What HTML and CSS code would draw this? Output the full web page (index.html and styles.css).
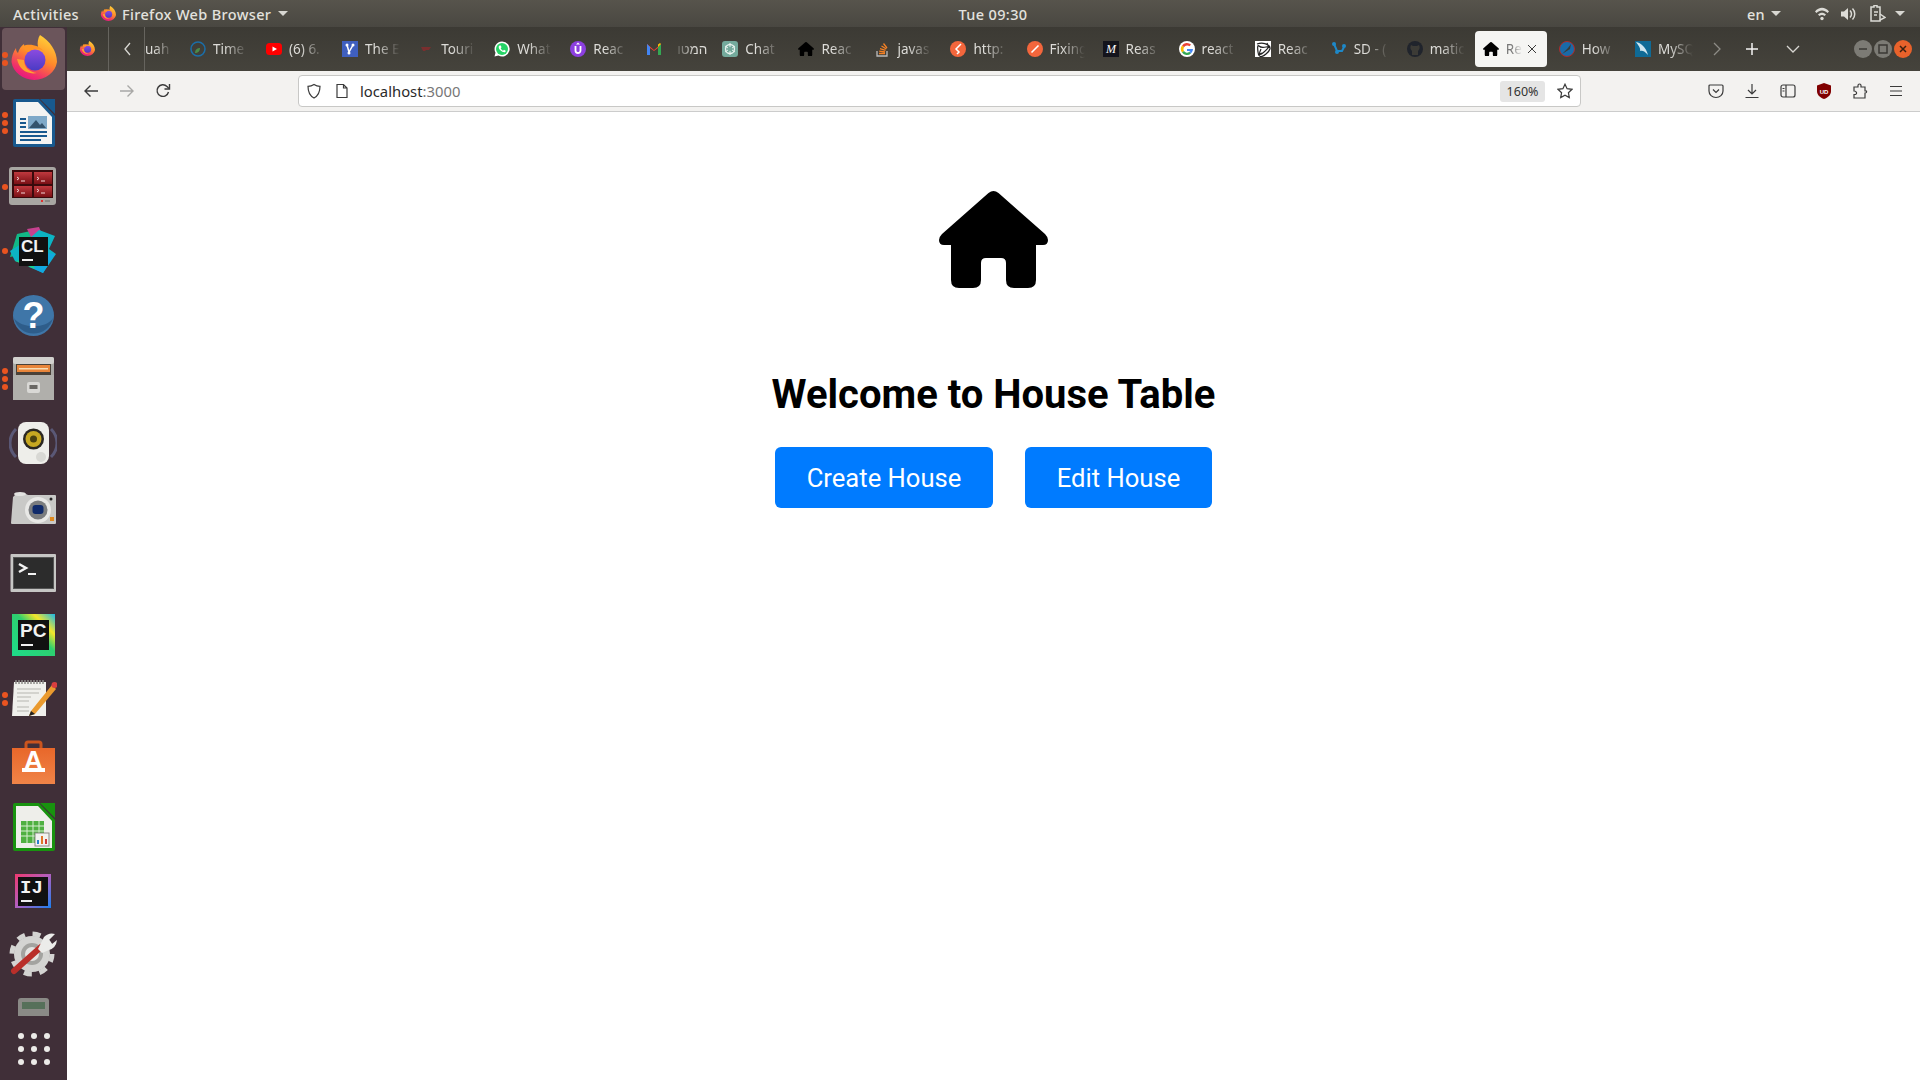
FILE: index.html
```html
<!DOCTYPE html>
<html lang="en">
<head>
    <meta charset="UTF-8">
    <title>React App</title>
    <link rel="stylesheet" href="styles.css">
</head>
<body>
    <svg class="sprites" width="0" height="0">
        <defs>
            <linearGradient id="fx-outer" x1="0.85" y1="0" x2="0.35" y2="1">
                <stop offset="0" stop-color="#ffd93a"/>
                <stop offset="0.5" stop-color="#ff8a2a"/>
                <stop offset="0.85" stop-color="#f0306a"/>
                <stop offset="1" stop-color="#e8177f"/>
            </linearGradient>
            <linearGradient id="fx-inner" x1="0.5" y1="0" x2="0.5" y2="1">
                <stop offset="0" stop-color="#8c4be0"/>
                <stop offset="1" stop-color="#4a3bc4"/>
            </linearGradient>
            <linearGradient id="red-panel" x1="0" y1="0" x2="0" y2="1">
                <stop offset="0" stop-color="#c0393e"/>
                <stop offset="1" stop-color="#7a1015"/>
            </linearGradient>
            <linearGradient id="pc-bg" x1="0" y1="1" x2="1" y2="0">
                <stop offset="0" stop-color="#1ddc8b"/>
                <stop offset="0.55" stop-color="#2ecf6f"/>
                <stop offset="0.75" stop-color="#f5e52a"/>
                <stop offset="1" stop-color="#1ab8e8"/>
            </linearGradient>
            <linearGradient id="store-bg" x1="0" y1="0" x2="0" y2="1">
                <stop offset="0" stop-color="#e8672a"/>
                <stop offset="1" stop-color="#f08448"/>
            </linearGradient>
            <linearGradient id="ij-bg" x1="0" y1="0" x2="1" y2="1">
                <stop offset="0" stop-color="#f0386e"/>
                <stop offset="0.5" stop-color="#b060c0"/>
                <stop offset="1" stop-color="#1a80f0"/>
            </linearGradient>
            <symbol id="firefox" viewBox="0 0 48 48">
                <path d="M31 0C41 6 48 16 48 27A23 21 0 0 1 2.500 27C2.500 22 4 17 7 13C7 16 8 17 9 18C10 14 12 11 15 9C15 12 16 13 18 13C22 11 26 11 29 12C28 8 29 3 31 0z" fill="url(#fx-outer)"/>
                <path d="M8 24C10 34 18 40 28 38C20 37 15 32 15 25z" fill="#ffa030"/>
                <circle cx="26" cy="25" r="10.500" fill="url(#fx-inner)"/>
                <path d="M14 11C20 8 30 10 36 17C30 13 24 13 21 16C19 18 16 17 14 11z" fill="#ff9426"/>
            </symbol>
            <symbol id="house" viewBox="0 0 109 97">
                <path d="M49.500 2Q54.500-2 59.500 2L106 43Q109 46 109 49Q109 54 104 54H97V89Q97 97 89 97H75Q67 97 67 89V72Q67 67 62 67H47Q42 67 42 72V89Q42 97 34 97H20Q12 97 12 89V54H5Q0 54 0 49Q0 46 3 43Z"/>
            </symbol>
        </defs>
    </svg>

    <header class="topbar">
        <div class="topbar-left">
            <span class="top-label activities">Activities</span>
            <span class="top-app">
                <svg class="icon16"><use href="#firefox"/></svg>
                <span class="top-label">Firefox Web Browser</span>
                <span class="caret"></span>
            </span>
        </div>
        <div class="top-label clock">Tue 09:30</div>
        <div class="topbar-right">
            <span class="top-label lang">en</span>
            <span class="caret lang-caret"></span>
            <svg class="tray wifi" viewBox="0 0 14 14"><path d="M0 4.500C4-.5 10-.5 14 4.500L12.500 6C9.500 2.500 4.500 2.500 1.500 6z" fill="#dcdbd6"/><path d="M3 7.500C5.500 5 8.500 5 11 7.500L9.500 9C8 7.500 6 7.500 4.500 9z" fill="#dcdbd6"/><circle cx="7" cy="11.500" r="1.700" fill="#dcdbd6"/></svg>
            <svg class="tray sound" viewBox="0 0 16 14"><path d="M0 4.500H3L7 1V13L3 9.500H0z" fill="#dcdbd6"/><path d="M9 3.500C11 5.500 11 8.500 9 10.500M11.500 1.500C14.500 4.500 14.500 9.500 11.500 12.500" fill="none" stroke="#dcdbd6" stroke-width="1.500"/></svg>
            <svg class="tray battery" viewBox="0 0 17 17"><path d="M5 .5H8V2H11V16H2V2H5z" fill="none" stroke="#dcdbd6" stroke-width="1.500"/><path d="M5 7H9M5 10H8M11 9L16 12.500 11 15" fill="none" stroke="#dcdbd6" stroke-width="1.500"/></svg>
            <span class="caret"></span>
        </div>
    </header>

    <div class="desktop">
        <!-- Ubuntu dock -->
        <nav class="dock">
            <ul class="dock-list">
                <li class="dock-item active">
                    <span class="dots"><i></i><i></i></span>
                    <svg class="dock-icon"><use href="#firefox"/></svg>
                </li>
                <li class="dock-item">
                    <span class="dots"><i></i><i></i><i></i></span>
                    <svg class="dock-icon" viewBox="0 0 48 48">
                        <path d="M31 0H46V15z" fill="#18598e"/>
                        <path d="M6 0H30L46 17V46Q46 48 44 48H6Q4 48 4 46V2Q4 0 6 0z" fill="#18598e"/>
                        <path d="M7 3H29L43 18V45H7z" fill="#f4f4f2"/>
                        <rect x="19" y="17" width="19" height="13" fill="#7ea9c8"/>
                        <path d="M20 29L27 21 31 26 33 24 37 29z" fill="#33536c"/>
                        <path d="M11 20H17M11 24H17M11 28H17M11 33H38M11 37H38M11 41H32" stroke="#18598e" stroke-width="2"/>
                    </svg>
                </li>
                <li class="dock-item">
                    <span class="dots"><i></i></span>
                    <svg class="dock-icon" viewBox="0 0 48 48">
                        <rect x="0" y="4" width="47" height="38" rx="3" fill="#a8a6a2"/>
                        <rect x="3" y="7" width="41" height="28" fill="#3a0a0c"/>
                        <rect x="5" y="9" width="18" height="12" fill="url(#red-panel)"/>
                        <rect x="25" y="9" width="18" height="12" fill="url(#red-panel)"/>
                        <rect x="5" y="23" width="18" height="11" fill="url(#red-panel)"/>
                        <rect x="25" y="23" width="18" height="11" fill="url(#red-panel)"/>
                        <path d="M8 14L10 15.500 8 17M12 18H16M28 14L30 15.500 28 17M32 18H36M8 26L10 27.500 8 29M12 30H16M28 26L30 27.500 28 29M32 30H36" stroke="#f2d4d4" fill="none"/>
                        <rect x="32" y="37" width="2" height="2" fill="#e03030"/>
                        <rect x="36" y="37" width="5" height="2" fill="#8a8884"/>
                    </svg>
                </li>
                <li class="dock-item">
                    <span class="dots"><i></i></span>
                    <svg class="dock-icon" viewBox="0 0 48 48">
                        <path d="M8 7L26 3 32 14 22 26 1 30z" fill="#12b886"/>
                        <path d="M18 2L30 0 34 10 24 14z" fill="#c6418f"/>
                        <path d="M30 3L46 9 40 22 47 27 34 46 18 38 6 34 1 24 20 12z" fill="#0cb4c4"/>
                        <path d="M38 26L46 27 34 46 20 40z" fill="#12a8e0"/>
                        <path d="M6 34L22 32 26 42 16 38z" fill="#1dd08a"/>
                        <rect x="10" y="10" width="29" height="29" fill="#111"/>
                        <text x="12" y="25" class="logo-text">CL</text>
                        <rect x="13" y="32" width="11" height="2" fill="#eee"/>
                    </svg>
                </li>
                <li class="dock-item">
                    <svg class="dock-icon" viewBox="0 0 48 48">
                        <circle cx="24.500" cy="24.500" r="20.500" fill="#3f76a8"/>
                        <path d="M5 27A20 20 0 0 0 44 27C38 38 12 38 5 27z" fill="#2e5d8a"/>
                        <text x="24.500" y="37" class="help-text">?</text>
                    </svg>
                </li>
                <li class="dock-item">
                    <span class="dots"><i></i><i></i><i></i></span>
                    <svg class="dock-icon" viewBox="0 0 48 48">
                        <rect x="4" y="2" width="41" height="43" rx="2" fill="#a9a8a4"/>
                        <rect x="4" y="2" width="41" height="7" rx="2" fill="#d2d1ce"/>
                        <rect x="7" y="9" width="35" height="11" fill="#4a4138"/>
                        <rect x="8" y="10" width="33" height="7" fill="#e8853a"/>
                        <rect x="10" y="13" width="29" height="1.500" fill="#f6dcb4"/>
                        <rect x="4" y="20" width="41" height="25" fill="#b0afab"/>
                        <rect x="18" y="27" width="13" height="11" rx="2" fill="#d9d8d5"/>
                        <rect x="20.500" y="30" width="8" height="4" fill="#6a6864"/>
                    </svg>
                </li>
                <li class="dock-item">
                    <svg class="dock-icon" viewBox="0 0 48 48">
                        <path d="M7 10C-1 18-1 30 7 38M42 10C50 18 50 30 42 38" fill="none" stroke="#5a5876" stroke-width="3"/>
                        <rect x="9" y="3" width="31" height="42" rx="8" fill="#eeeeea"/>
                        <circle cx="24.500" cy="20" r="10.500" fill="#2a2722"/>
                        <circle cx="24.500" cy="20" r="8" fill="#c7a822"/>
                        <circle cx="24.500" cy="20" r="3.500" fill="#4b4210"/>
                        <circle cx="32" cy="38" r="5" fill="#d8d8d4"/>
                    </svg>
                </li>
                <li class="dock-item">
                    <svg class="dock-icon" viewBox="0 0 48 48">
                        <path d="M4 14L7 11H17L19 12H46Q47 12 47 13V40Q47 41 46 41H3Q2 41 2 40z" fill="#c9c9c7"/>
                        <ellipse cx="11" cy="11" rx="6" ry="2" fill="#e2e2e0"/>
                        <circle cx="29" cy="27" r="13" fill="#e8e8e6"/>
                        <circle cx="29" cy="27" r="9.500" fill="#7a7c7e"/>
                        <rect x="23.500" y="22" width="11" height="9" rx="3" fill="#0f2a6a"/>
                        <rect x="41" y="34" width="4" height="4" fill="#e08a20"/>
                        <circle cx="42" cy="16" r="1.500" fill="#222"/>
                    </svg>
                </li>
                <li class="dock-item">
                    <svg class="dock-icon" viewBox="0 0 48 48">
                        <rect x="1.500" y="7" width="45.500" height="38" rx="1" fill="#c6c6c4"/>
                        <rect x="4" y="10" width="41" height="32" fill="#555"/>
                        <rect x="5" y="11" width="39" height="30" fill="#2c2c2c"/>
                        <path d="M10 17L17 21 10 25" fill="none" stroke="#f2f2f2" stroke-width="2.500"/>
                        <rect x="19" y="26" width="8" height="2" fill="#f2f2f2"/>
                    </svg>
                </li>
                <li class="dock-item">
                    <svg class="dock-icon" viewBox="0 0 48 48">
                        <rect x="3" y="3" width="43" height="42" fill="url(#pc-bg)"/>
                        <rect x="9" y="9" width="31" height="30" fill="#111"/>
                        <text x="11" y="26" class="logo-text pc-text">PC</text>
                        <rect x="12" y="33" width="12" height="2" fill="#f2f2f2"/>
                    </svg>
                </li>
                <li class="dock-item">
                    <span class="dots"><i></i><i></i></span>
                    <svg class="dock-icon" viewBox="0 0 48 48">
                        <path d="M5 7H37V41H3z" fill="#f0f0ec"/>
                        <path d="M7 5V9M10 5V9M13 5V9M16 5V9M19 5V9M22 5V9M25 5V9M28 5V9M31 5V9M34 5V9" stroke="#8a8a86" stroke-width="1.500"/>
                        <path d="M8 14H32M8 18H30M8 22H22M8 26H20M8 32H20M8 36H20" stroke="#b5b5b0" stroke-width="1.200"/>
                        <path d="M22 36L43 10 47 14 26 39 20 41z" fill="#ea9a2e"/>
                        <path d="M20 41L22 36 26 39z" fill="#222"/>
                        <circle cx="45.500" cy="10" r="3" fill="#d93f3f"/>
                    </svg>
                </li>
                <li class="dock-item">
                    <svg class="dock-icon" viewBox="0 0 48 48">
                        <path d="M17 10V5Q17 3 19 3H30Q32 3 32 5V10" fill="none" stroke="#c9541e" stroke-width="3"/>
                        <path d="M3 9H46V45H3z" fill="url(#store-bg)"/>
                        <text x="24.500" y="30" class="store-text">A</text>
                        <rect x="13" y="29" width="23" height="4" fill="#fff"/>
                    </svg>
                </li>
                <li class="dock-item">
                    <svg class="dock-icon" viewBox="0 0 48 48">
                        <path d="M31 0H46V15z" fill="#18930f"/>
                        <path d="M6 0H30L46 17V46Q46 48 44 48H6Q4 48 4 46V2Q4 0 6 0z" fill="#18930f"/>
                        <path d="M7 3H29L43 18V45H7z" fill="#eeeeea"/>
                        <rect x="12" y="18" width="23" height="22" fill="#4fb041"/>
                        <path d="M12 23H35M12 28H35M12 33H35M18 18V40M24 18V40M30 18V40" stroke="#d8efd2"/>
                        <rect x="26" y="30" width="14" height="13" fill="#f2f2f0" stroke="#8a8a86"/>
                        <rect x="28" y="37" width="2" height="4" fill="#2a7fd0"/>
                        <rect x="32" y="33" width="2" height="8" fill="#e0762a"/>
                        <rect x="36" y="36" width="2" height="5" fill="#d03a3a"/>
                    </svg>
                </li>
                <li class="dock-item">
                    <svg class="dock-icon" viewBox="0 0 48 48">
                        <rect x="6" y="7" width="36" height="34" fill="url(#ij-bg)"/>
                        <rect x="9" y="10" width="30" height="29" fill="#111"/>
                        <text x="11" y="26" class="logo-text ij-text">IJ</text>
                        <rect x="12" y="33" width="11" height="2" fill="#eee"/>
                    </svg>
                </li>
                <li class="dock-item">
                    <svg class="dock-icon" viewBox="0 0 48 48">
                        <circle cx="23" cy="23" r="20" fill="none" stroke="#d4d4d2" stroke-width="5" stroke-dasharray="8 7.700"/>
                        <circle cx="23" cy="23" r="18" fill="#d4d4d2"/>
                        <circle cx="23" cy="23" r="11" fill="#a3a3a0"/>
                        <circle cx="23" cy="23" r="7" fill="#e4e4e2"/>
                        <path d="M5 40L32 16" stroke="#b92f2a" stroke-width="6" stroke-linecap="round"/>
                        <path d="M29 18L35 6Q40 1 46 3L40 9 43 13 48 9Q47 17 40 19L33 22z" fill="#ececea"/>
                    </svg>
                </li>
                <li class="dock-item">
                    <svg class="dock-icon" viewBox="0 0 48 48">
                        <path d="M12 3H37Q40 3 40 6V30H9V6Q9 3 12 3z" fill="#8a8a86"/>
                        <rect x="13" y="7" width="23" height="7" fill="#56705a"/>
                    </svg>
                </li>
            </ul>
            <div class="app-grid">
                <i></i><i></i><i></i><i></i><i></i><i></i><i></i><i></i><i></i>
            </div>
        </nav>

        <div class="browser">
            <!-- Firefox tab strip -->
            <div class="tabbar">
                <span class="fx-view">
                    <svg class="icon16"><use href="#firefox"/></svg>
                </span>
                <span class="tab-scroll">
                    <svg class="icon16" viewBox="0 0 16 16"><path d="M10 2L5 8l5 6" class="line"/></svg>
                </span>
                <div class="tabs">
                    <div class="tab tab-cut"><span class="tab-label">uah</span></div>
                    <div class="tab">
                        <svg class="icon16" viewBox="0 0 16 16"><circle cx="8" cy="8" r="7" fill="none" stroke="#1b6ea8" stroke-width="1.500"/><path d="M5 12C5 8 8 7 10 7 10 10 8 12 5 12z" fill="#4a8a4a"/></svg>
                        <span class="tab-label">Time</span>
                    </div>
                    <div class="tab">
                        <svg class="icon16" viewBox="0 0 16 16"><rect y="2" width="16" height="12" rx="3.500" fill="#f00"/><path d="M6.500 5.500L11 8 6.500 10.500z" fill="#fff"/></svg>
                        <span class="tab-label">(6) 6.</span>
                    </div>
                    <div class="tab">
                        <svg class="icon16" viewBox="0 0 16 16"><rect width="16" height="16" fill="#3f5fbf"/><path d="M5 4L7 11 11 4" fill="none" stroke="#fff" stroke-width="1.500"/><circle cx="5" cy="4" r="1.500" fill="#fff"/><circle cx="11" cy="4" r="1.500" fill="#fff"/><circle cx="7" cy="12" r="1.500" fill="#fff"/></svg>
                        <span class="tab-label">The E</span>
                    </div>
                    <div class="tab">
                        <svg class="icon16" viewBox="0 0 16 16"><path d="M3 6H13L11 9H8L7 10H5z" fill="#7a2f2f"/></svg>
                        <span class="tab-label">Touri</span>
                    </div>
                    <div class="tab">
                        <svg class="icon16" viewBox="0 0 16 16"><path d="M8 .5A7.500 7.500 0 0 0 1.500 11.700L.5 15.500 4.400 14.500A7.500 7.500 0 1 0 8 .5z" fill="#fff"/><circle cx="8" cy="8" r="6" fill="#25d366"/><path d="M5.500 4.500L6.800 4.500 7.500 6.300 6.700 7.300C7.200 8.500 8 9.200 9 9.700L10 8.800 11.700 9.700 11.400 11C9 12 4 8.500 4.800 5.200z" fill="#fff"/></svg>
                        <span class="tab-label">What</span>
                    </div>
                    <div class="tab">
                        <svg class="icon16" viewBox="0 0 16 16"><circle cx="8" cy="8" r="8" fill="#8c3fe0"/><path d="M5.500 5V9.500A2.500 2.500 0 0 0 10.500 9.500V5" fill="none" stroke="#fff" stroke-width="1.800"/><path d="M8 1.500L10 3.500H6z" fill="#fff"/></svg>
                        <span class="tab-label">Reac</span>
                    </div>
                    <div class="tab">
                        <svg class="icon16" viewBox="0 0 16 16"><path d="M1 3L8 9 15 3V14H12V7L8 10 4 7V14H1z" fill="#ea4335"/><path d="M1 3V14H4V6z" fill="#4285f4"/><path d="M12 6V14H15V3z" fill="#34a853"/><path d="M12 6L15 3 14 2 12 3.500z" fill="#fbbc04"/></svg>
                        <span class="tab-label rtl" dir="rtl">המטו</span>
                    </div>
                    <div class="tab">
                        <svg class="icon16" viewBox="0 0 16 16"><rect width="16" height="16" rx="3" fill="#74aa9c"/><circle cx="8" cy="8" r="4.500" fill="none" stroke="#e8f2ee" stroke-width="1.300"/><path d="M8 2V6M13 5L10 7M13 11L10 9M8 14V10M3 11L6 9M3 5L6 7" stroke="#e8f2ee"/></svg>
                        <span class="tab-label">Chat</span>
                    </div>
                    <div class="tab">
                        <svg class="icon16"><use href="#house"/></svg>
                        <span class="tab-label">Reac</span>
                    </div>
                    <div class="tab">
                        <svg class="icon16" viewBox="0 0 16 16"><path d="M3 10V15H13V10" fill="none" stroke="#bcbbbb" stroke-width="1.300"/><path d="M5 12.500H11M5.200 10.200L11 11M6 7.700L11.500 9.300M7.500 5L12.300 8M9.500 2.500L13 7" stroke="#f48024" stroke-width="1.300"/></svg>
                        <span class="tab-label">javas</span>
                    </div>
                    <div class="tab">
                        <svg class="icon16" viewBox="0 0 16 16"><circle cx="8" cy="8" r="8" fill="#f3663c"/><path d="M11 3L6 8 9 11 7 13" fill="none" stroke="#fff" stroke-width="1.500"/></svg>
                        <span class="tab-label">http:</span>
                    </div>
                    <div class="tab">
                        <svg class="icon16" viewBox="0 0 16 16"><circle cx="8" cy="8" r="8" fill="#f3663c"/><path d="M4.500 11.500L11.500 4.500" stroke="#fff" stroke-width="1.600"/></svg>
                        <span class="tab-label">Fixing</span>
                    </div>
                    <div class="tab">
                        <svg class="icon16" viewBox="0 0 16 16"><rect width="16" height="16" fill="#14141c"/><text x="8" y="12" class="medium-text">M</text></svg>
                        <span class="tab-label">Reas</span>
                    </div>
                    <div class="tab">
                        <svg class="icon16" viewBox="0 0 16 16"><circle cx="8" cy="8" r="8" fill="#fff"/><path d="M8 4.500A3.500 3.500 0 0 0 5 6.200L3 4.500A6 6 0 0 1 12 3.500L10.500 5.200A3.500 3.500 0 0 0 8 4.500z" fill="#ea4335"/><path d="M3 4.500A6 6 0 0 0 3 11.500L5 10A3.500 3.500 0 0 1 5 6.200z" fill="#fbbc04"/><path d="M3 11.500A6 6 0 0 0 12 12.500L10.300 10.800A3.500 3.500 0 0 1 5 10z" fill="#34a853"/><path d="M14 8H8V10H11.500A3 3 0 0 1 10.300 10.800L12 12.500A6 6 0 0 0 14 8z" fill="#4285f4"/></svg>
                        <span class="tab-label">react</span>
                    </div>
                    <div class="tab">
                        <svg class="icon16" viewBox="0 0 16 16"><rect width="16" height="16" fill="#fff"/><path d="M2 3Q8 1 13 4T11 13 3 11 4 5 11 6 9 11 6 8M3 14L7 12M12 2L14 7" fill="none" stroke="#222" stroke-width="1.200"/></svg>
                        <span class="tab-label">Reac</span>
                    </div>
                    <div class="tab">
                        <svg class="icon16" viewBox="0 0 16 16"><path d="M3 3L6 10H11L13 6" fill="none" stroke="#1e88c8" stroke-width="2"/><circle cx="3" cy="3" r="2" fill="#1e88c8"/><circle cx="13" cy="5" r="2" fill="#1e88c8"/><circle cx="6" cy="11" r="2" fill="#1e88c8"/></svg>
                        <span class="tab-label">SD - (</span>
                    </div>
                    <div class="tab">
                        <svg class="icon16" viewBox="0 0 16 16"><circle cx="8" cy="8" r="8" fill="#20242c"/><path d="M5 14V10C3 8 3 6 4 4L6 5H10L12 4C13 6 13 8 11 10V14z" fill="#3c3b36"/></svg>
                        <span class="tab-label">matic</span>
                    </div>
                    <div class="tab tab-active">
                        <svg class="icon16 dark"><use href="#house"/></svg>
                        <span class="tab-label active-label">Re</span>
                        <svg class="tab-close" viewBox="0 0 10 10"><path d="M1 1L9 9M9 1L1 9" stroke="#3a3a3a" stroke-width="1"/></svg>
                    </div>
                    <div class="tab">
                        <svg class="icon16" viewBox="0 0 16 16"><circle cx="8" cy="8" r="7.500" fill="#1a6aa8" stroke="#b02a2a"/><path d="M3 13L9 7 12 3 11 8z" fill="#3c3b36"/></svg>
                        <span class="tab-label">How</span>
                    </div>
                    <div class="tab">
                        <svg class="icon16" viewBox="0 0 16 16"><rect width="16" height="16" fill="#0f6a96"/><path d="M1 1C6 2 11 6 13 14 10 10 7 9 5 10 6 7 3 4 1 1z" fill="#cfe6f0"/></svg>
                        <span class="tab-label">MySQ</span>
                    </div>
                </div>
                <span class="tab-btn"><svg class="icon16" viewBox="0 0 16 16"><path d="M6 2L12 8l-6 6" class="line dim"/></svg></span>
                <span class="tab-btn"><svg class="icon16" viewBox="0 0 16 16"><path d="M8 2V14M2 8H14" class="line bright"/></svg></span>
                <span class="tab-btn list-btn"><svg class="icon16" viewBox="0 0 16 16"><path d="M2 5L8 11 14 5" class="line"/></svg></span>
                <div class="win-btns">
                    <span class="win-btn"><svg viewBox="0 0 18 18"><path d="M5 9H13" stroke="#3a3934" stroke-width="1.500"/></svg></span>
                    <span class="win-btn"><svg viewBox="0 0 18 18"><rect x="5" y="5" width="8" height="8" fill="none" stroke="#3a3934" stroke-width="1.500"/></svg></span>
                    <span class="win-btn win-close"><svg viewBox="0 0 18 18"><path d="M6 6L12 12M12 6L6 12" stroke="#3a2010" stroke-width="1.500"/></svg></span>
                </div>
            </div>

            <!-- Firefox navigation bar -->
            <div class="navbar">
                <span class="nav-btn"><svg class="icon16" viewBox="0 0 16 16"><path d="M15 8H2M7.500 2.500L2 8l5.500 5.500" class="nav-line"/></svg></span>
                <span class="nav-btn"><svg class="icon16" viewBox="0 0 16 16"><path d="M1 8H14M8.500 2.500L14 8l-5.500 5.500" class="nav-line faded"/></svg></span>
                <span class="nav-btn"><svg class="icon16" viewBox="0 0 16 16"><path d="M13.500 9A5.800 5.800 0 1 1 12 3.500L14 5.500" class="nav-line"/><path d="M14.500 1V6H9.500" class="nav-line"/></svg></span>
                <div class="urlbar">
                    <svg class="icon16" viewBox="0 0 16 16"><path d="M8 1.500C10 2.800 12 3.300 14 3.300 14 9 12 13 8 15 4 13 2 9 2 3.300 4 3.300 6 2.800 8 1.500z" class="nav-line thin"/></svg>
                    <svg class="icon16 page-icon" viewBox="0 0 16 16"><path d="M3 1.500H9.500L13 5V14.500H3zM9.500 1.500V5H13" class="nav-line thin"/></svg>
                    <span class="url-text">localhost<span class="url-port">:3000</span></span>
                    <span class="zoom-level">160%</span>
                    <svg class="icon16 star" viewBox="0 0 16 16"><path d="M8 1.200L10.100 5.700 15 6.300 11.400 9.700 12.300 14.600 8 12.200 3.700 14.600 4.600 9.700 1 6.300 5.900 5.700z" class="nav-line thin"/></svg>
                </div>
                <span class="nav-btn"><svg class="icon16" viewBox="0 0 16 16"><path d="M2 2H14Q15 2 15 3V8A7 6.500 0 0 1 1 8V3Q1 2 2 2z" class="nav-line thin"/><path d="M5 6.500L8 9.500 11 6.500" class="nav-line thin"/></svg></span>
                <span class="nav-btn"><svg class="icon16" viewBox="0 0 16 16"><path d="M8 1V11M4 7L8 11 12 7M1.500 14.500H14.500" class="nav-line thin"/></svg></span>
                <span class="nav-btn"><svg class="icon16" viewBox="0 0 16 16"><rect x="1" y="2" width="14" height="12" rx="2" class="nav-line thin"/><path d="M6 2V14M2.500 5.500H4.500M2.500 8H4.500" class="nav-line thin"/></svg></span>
                <span class="nav-btn"><svg class="icon16" viewBox="0 0 16 16"><path d="M8 0L15 2.500V8C15 12 12 14.500 8 16 4 14.500 1 12 1 8V2.500z" fill="#800000"/><text x="8" y="10.500" class="ublock-text">UD</text></svg></span>
                <span class="nav-btn"><svg class="icon16" viewBox="0 0 16 16"><path d="M6 4V2.500Q6 1 7.500 1T9 2.500V4H13V8H14.500Q15 10 13 10V15H2V11.500H3.500Q5 11 4.500 9.500 4 8 2 8V4z" class="nav-line thin"/></svg></span>
                <span class="nav-btn"><svg class="icon16" viewBox="0 0 16 16"><path d="M2 3.500H14M2 8H14M2 12.500H14" class="nav-line thin"/></svg></span>
            </div>

            <main class="page">
                <svg class="home-icon"><use href="#house"/></svg>
                <h1 class="title">Welcome to House Table</h1>
                <div class="actions">
                    <button class="action-btn create-btn">Create House</button>
                    <button class="action-btn edit-btn">Edit House</button>
                </div>
            </main>
        </div>
    </div>
</body>
</html>
```

FILE: styles.css
```css
/* General styling */
* {
    box-sizing: border-box;
}
html, body {
    margin: 0;
    height: 100%;
    overflow: hidden;
}
body {
    display: flex;
    flex-direction: column;
    background: #fff;
    font-family: "Noto Sans", sans-serif;
}
.sprites {
    position: absolute;
}
.icon16 {
    width: 16px;
    height: 16px;
    flex-shrink: 0;
    fill: #000;
}

/* Ubuntu top bar */
.topbar {
    height: 27px;
    padding: 0 15px 0 13px;
    flex-shrink: 0;
    display: grid;
    grid-template-columns: 1fr auto 1fr;
    align-items: center;
    background: linear-gradient(#57544c, #494741);
}
.topbar-left,
.top-app,
.topbar-right {
    display: flex;
    align-items: center;
}
.top-app {
    margin-left: 21px;
    gap: 6px;
}
.topbar-right {
    justify-content: flex-end;
}
.top-label {
    font-size: 14.500px;
    font-weight: 500;
    color: #e3e2de;
    white-space: nowrap;
    letter-spacing: 0.350px;
}
.clock {
    margin-left: 68px;
}
.caret {
    width: 0;
    height: 0;
    margin-left: 1px;
    border-left: 5px solid transparent;
    border-right: 5px solid transparent;
    border-top: 5px solid #d8d7d2;
}
.lang-caret {
    margin: 0 34px 0 6px;
}
.tray {
    flex-shrink: 0;
    margin-right: 12px;
}
.wifi {
    width: 14px;
    height: 14px;
}
.sound {
    width: 16px;
    height: 14px;
}
.battery {
    width: 17px;
    height: 17px;
    margin-right: 8px;
}

.desktop {
    flex: 1;
    display: flex;
    min-height: 0;
}

/* Dock */
.dock {
    width: 67px;
    flex-shrink: 0;
    display: flex;
    flex-direction: column;
    background: #402f38;
}
.dock-list {
    list-style: none;
    margin: 0;
    padding: 0;
    height: 989px;
    overflow: hidden;
}
.dock-item {
    position: relative;
    height: 64px;
    padding-right: 2px;
    display: flex;
    align-items: center;
    justify-content: center;
}
.dock-item.active::before {
    content: "";
    position: absolute;
    left: 2px;
    right: 2px;
    top: 1px;
    bottom: 1px;
    border-radius: 4px;
    background: #6b555b;
}
.dock-icon {
    position: relative;
    width: 48px;
    height: 48px;
}
.dots {
    position: absolute;
    left: 2px;
    top: 0;
    bottom: 0;
    z-index: 1;
    display: flex;
    flex-direction: column;
    justify-content: center;
    gap: 2px;
}
.dots i {
    width: 6px;
    height: 6px;
    border-radius: 50%;
    background: #e95420;
}
.app-grid {
    height: 64px;
    padding: 17px 0 15px 18px;
    display: grid;
    grid-template-columns: repeat(3, 6px);
    grid-template-rows: repeat(3, 6px);
    gap: 7px;
}
.app-grid i {
    border-radius: 50%;
    background: #ecebe8;
}
.logo-text {
    font-family: "Liberation Sans", sans-serif;
    font-weight: 700;
    font-size: 17px;
    fill: #f2f2f2;
}
.pc-text {
    font-size: 19px;
}
.ij-text {
    font-family: "Liberation Mono", monospace;
    font-size: 19px;
}
.help-text {
    font-family: "Liberation Sans", sans-serif;
    font-weight: 700;
    font-size: 36px;
    fill: #fff;
    text-anchor: middle;
}
.store-text {
    font-family: "Liberation Sans", sans-serif;
    font-weight: 700;
    font-size: 26px;
    fill: #fff;
    text-anchor: middle;
}
.medium-text {
    font-family: "Liberation Serif", serif;
    font-style: italic;
    font-size: 12px;
    fill: #fff;
    text-anchor: middle;
}
.ublock-text {
    font-family: "Liberation Sans", sans-serif;
    font-size: 6px;
    font-weight: 700;
    fill: #fff;
    text-anchor: middle;
}

/* Browser */
.browser {
    flex: 1;
    min-width: 0;
    display: flex;
    flex-direction: column;
}
.tabbar {
    height: 44px;
    flex-shrink: 0;
    display: flex;
    align-items: center;
    background: linear-gradient(#3c3a34, #45433c);
}
.fx-view {
    width: 42px;
    height: 44px;
    padding-left: 12px;
    display: flex;
    align-items: center;
    border-right: 1px solid #66645e;
}
.tab-scroll {
    width: 36px;
    height: 44px;
    padding-left: 11px;
    display: flex;
    align-items: center;
    border-right: 1px solid #66645e;
}
.line {
    fill: none;
    stroke: #d8d7d2;
    stroke-width: 1.300;
}
.line.dim {
    stroke: #8d8c86;
}
.line.bright {
    stroke: #f4f4f2;
    stroke-width: 1.500;
}
.tabs {
    width: 1553px;
    flex-shrink: 0;
    display: flex;
    overflow: hidden;
}
.tab {
    width: 76.060px;
    height: 36px;
    flex-shrink: 0;
    padding-left: 10px;
    display: flex;
    align-items: center;
    gap: 7px;
    position: relative;
}
.tab-cut {
    width: 35px;
    padding-left: 0;
}
.tab-label {
    width: 38px;
    overflow: hidden;
    white-space: nowrap;
    font-size: 13.500px;
    color: #dddcd8;
    -webkit-mask-image: linear-gradient(to right, #000 30%, transparent 92%);
    mask-image: linear-gradient(to right, #000 30%, transparent 92%);
}
.tab-cut .tab-label {
    width: 30px;
}
.tab-label.rtl {
    font-family: "Liberation Sans", "DejaVu Sans", sans-serif;
    text-align: right;
    -webkit-mask-image: linear-gradient(to left, #000 30%, transparent 92%);
    mask-image: linear-gradient(to left, #000 30%, transparent 92%);
}
.tab-active::before {
    content: "";
    position: absolute;
    left: 2px;
    right: 2px;
    top: 0;
    bottom: 0;
    border-radius: 4px;
    background: #f5f5f3;
}
.tab-active > * {
    position: relative;
}
.active-label {
    width: 18px;
    color: #777;
}
.tab-close {
    position: absolute;
    left: 54px;
    top: 13px;
    width: 10px;
    height: 10px;
}
.tab-btn {
    width: 36px;
    height: 44px;
    display: flex;
    align-items: center;
    justify-content: center;
}
.list-btn {
    margin-left: 5px;
}
.win-btns {
    margin-left: 42.500px;
    display: flex;
    gap: 2px;
}
.win-btn {
    width: 18px;
    height: 18px;
    border-radius: 50%;
    background: #7c7b75;
}
.win-btn svg {
    display: block;
}
.win-close {
    background: #e8622b;
}

/* Navigation bar */
.navbar {
    height: 41px;
    flex-shrink: 0;
    padding: 0 5px 0 6px;
    display: flex;
    align-items: center;
    background: #f3f2f0;
    border-bottom: 1px solid #ccc;
}
.nav-btn {
    width: 36px;
    height: 36px;
    flex-shrink: 0;
    display: flex;
    align-items: center;
    justify-content: center;
}
.nav-line {
    fill: none;
    stroke: #3b3b3b;
    stroke-width: 1.400;
}
.nav-line.thin {
    stroke-width: 1.200;
}
.nav-line.faded {
    stroke: #a8a8a6;
}
.urlbar {
    width: 1283px;
    height: 32px;
    margin: 0 116.500px 0 117px;
    padding: 0 7px;
    flex-shrink: 0;
    display: flex;
    align-items: center;
    background: #fff;
    border: 1px solid #c8c8c6;
    border-radius: 4px;
}
.page-icon {
    margin-left: 12px;
}
.url-text {
    margin-left: 10px;
    flex: 1;
    font-size: 14.800px;
    color: #2a2a2a;
}
.url-port {
    color: #777;
}
.zoom-level {
    width: 45px;
    height: 21px;
    margin-right: 12px;
    font-size: 12.500px;
    line-height: 21px;
    text-align: center;
    color: #333;
    background: #e5e5e5;
    border-radius: 3px;
}

/* Page content */
.page {
    flex: 1;
    padding-top: 79px;
    display: flex;
    flex-direction: column;
    align-items: center;
    font-family: Roboto, sans-serif;
    background: #fff;
}
.home-icon {
    width: 109px;
    height: 97px;
    fill: #000;
}
.title {
    margin: 79px 0 0;
    font-size: 40px;
    line-height: 56px;
    font-weight: 700;
    color: #000;
}
.actions {
    margin-top: 24px;
    display: flex;
    gap: 32px;
}
.action-btn {
    height: 61px;
    border: none;
    border-radius: 6px;
    font-family: inherit;
    font-size: 25.600px;
    color: #fff;
    background-color: #007bff;
}
.create-btn {
    width: 218px;
}
.edit-btn {
    width: 187px;
}
```
